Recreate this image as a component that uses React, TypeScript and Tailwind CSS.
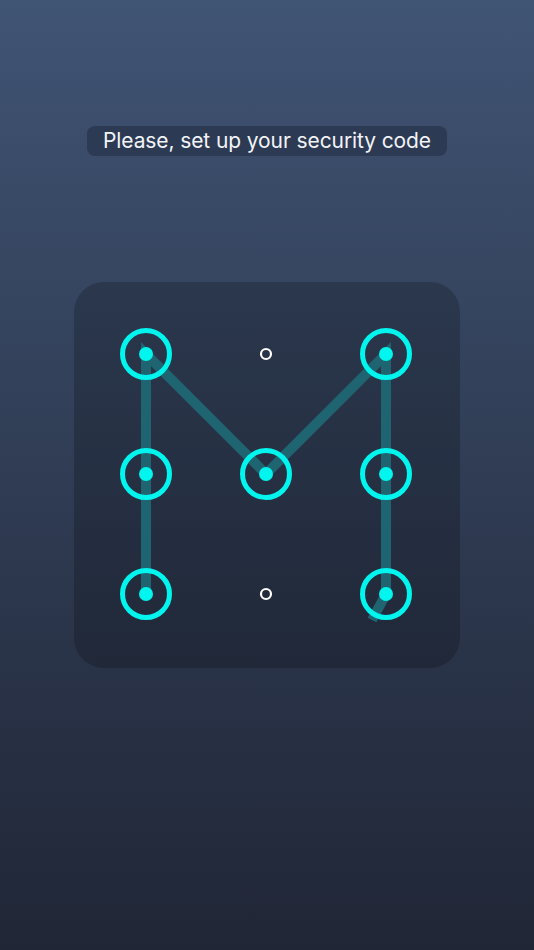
const POS = [72, 192, 312]

// indices: row * 3 + col
const selected = [0, 2, 3, 4, 5, 6, 8]
const path = [6, 3, 0, 4, 2, 5, 8]

function Node({ x, y, active }: { x: number; y: number; active: boolean }) {
  if (!active) {
    return <circle cx={x} cy={y} r={5} fill="none" stroke="#ffffff" strokeWidth={2.2} />
  }
  return (
    <g>
      <circle cx={x} cy={y} r={23.5} fill="none" stroke="#00f5ee" strokeWidth={5} />
      <circle cx={x} cy={y} r={7} fill="#00f5ee" />
    </g>
  )
}

export default function App() {
  const points = path.map((i) => `${POS[i % 3]},${POS[Math.floor(i / 3)]}`).join(' ') + ' 298,338'

  return (
    <div
      className="flex min-h-[950px] w-full flex-col items-center bg-gradient-to-b from-[#405474] to-[#202636] pt-[126px]"
      style={{ fontFamily: 'Inter, "Noto Sans", sans-serif' }}
    >
      <div className="flex h-[30px] items-center rounded-lg bg-[#2d3a53] px-4 text-[21px] tracking-[-0.1px] text-[#f2f4f8]">
        Please, set up your security code
      </div>

      <div className="mt-[126px] h-[386px] w-[386px] rounded-[30px] bg-black/20">
        <svg width={386} height={386} viewBox="0 0 386 386">
          <polyline
            points={points}
            fill="none"
            stroke="#1f6571"
            strokeWidth={10}
            strokeLinejoin="miter"
          />
          {POS.map((y, r) =>
            POS.map((x, c) => (
              <Node key={`${r}-${c}`} x={x} y={y} active={selected.includes(r * 3 + c)} />
            ))
          )}
        </svg>
      </div>
    </div>
  )
}
